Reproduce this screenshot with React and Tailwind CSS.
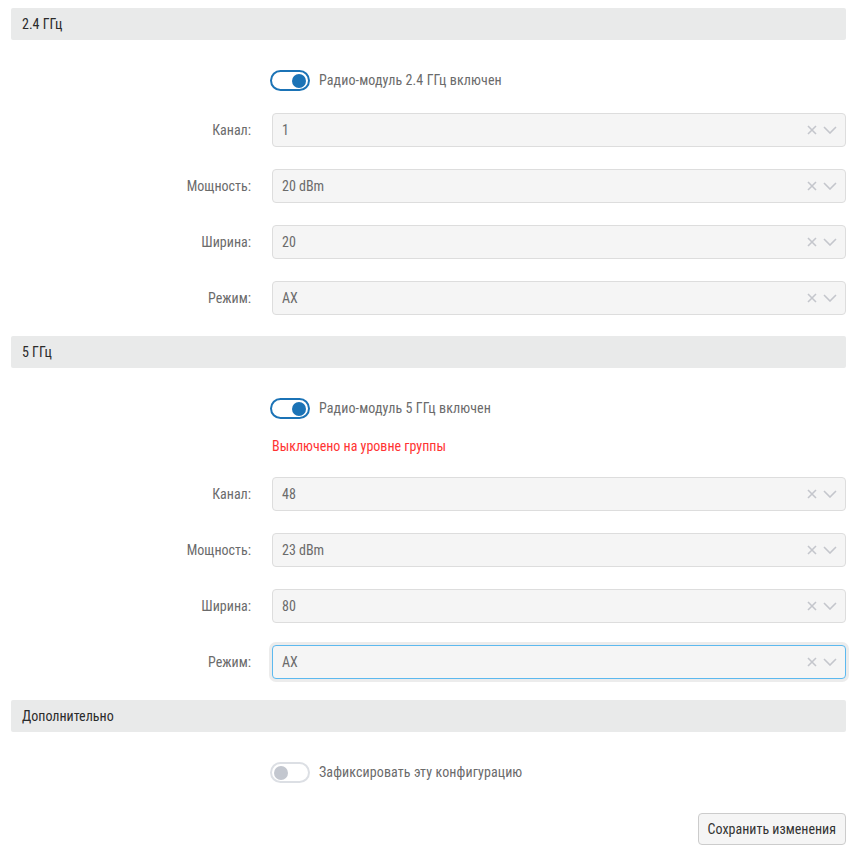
import React from "react";

const font = { fontFamily: "'Roboto Condensed', 'Liberation Sans', sans-serif" };

function SectionHeader({ children }) {
  return (
    <div className="flex h-8 items-center rounded-[2px] bg-[#e9eaea] pl-[11px] text-[14px] font-normal text-[#2b2b2b]">
      {children}
    </div>
  );
}

function Toggle({ on, label }) {
  return (
    <div className="flex items-center pl-[259px]">
      <span
        className={
          on
            ? "flex h-[21px] w-[40px] items-center justify-end rounded-full border-2 border-[#1b73b6] bg-white pr-[2px]"
            : "flex h-[21px] w-[40px] items-center justify-start rounded-full border-2 border-[#dcdfe4] bg-white pl-[2px]"
        }
      >
        <span className={on ? "h-[14px] w-[14px] rounded-full bg-[#1b73b6]" : "h-[14px] w-[14px] rounded-full bg-[#c3c7cf]"} />
      </span>
      <span className="ml-[9px] text-[14px] tracking-[0.1px] text-[#6b6b6b]">{label}</span>
    </div>
  );
}

function SelectRow({ label, value, focused }) {
  return (
    <div className="flex items-center">
      <div className="w-[240px] text-right text-[14px] text-[#6b6b6b]">{label}</div>
      <div className="ml-[21px] flex-1">
        <div
          className={
            focused
              ? "flex h-[34px] items-center rounded-[4px] border border-[#5cb9ef] bg-[#f5f5f5] pl-[9px] pr-[8px] ring-[3px] ring-[#ececec]"
              : "flex h-[34px] items-center rounded-[4px] border border-[#dddddd] bg-[#f5f5f5] pl-[9px] pr-[8px]"
          }
        >
          <span className="flex-1 text-[14px] text-[#6b6b6b]">{value}</span>
          <svg width="10" height="10" viewBox="0 0 10 10" className="mr-[6px]">
            <path d="M1 1 L9 9 M9 1 L1 9" stroke="#c4c6cc" strokeWidth="1.6" fill="none" />
          </svg>
          <svg width="14" height="8" viewBox="0 0 14 8">
            <path d="M1 1 L7 7 L13 1" stroke="#c4c6cc" strokeWidth="1.6" fill="none" />
          </svg>
        </div>
      </div>
    </div>
  );
}

export default function App() {
  return (
    <div className="min-h-[857px] bg-white pl-[11px] pr-[17px] pt-2" style={font}>
      <SectionHeader>2.4 ГГц</SectionHeader>
      <div className="mt-[30px]">
        <Toggle on label="Радио-модуль 2.4 ГГц включен" />
      </div>
      <div className="mt-[22px] flex flex-col gap-[22px]">
        <SelectRow label="Канал:" value="1" />
        <SelectRow label="Мощность:" value="20 dBm" />
        <SelectRow label="Ширина:" value="20" />
        <SelectRow label="Режим:" value="AX" />
      </div>

      <div className="mt-[21px]">
        <SectionHeader>5 ГГц</SectionHeader>
      </div>
      <div className="mt-[30px]">
        <Toggle on label="Радио-модуль 5 ГГц включен" />
      </div>
      <div className="mt-[17px] h-5 pl-[261px] text-[14px] leading-5 text-[#ff3333]">
        Выключено на уровне группы
      </div>
      <div className="mt-[21px] flex flex-col gap-[22px]">
        <SelectRow label="Канал:" value="48" />
        <SelectRow label="Мощность:" value="23 dBm" />
        <SelectRow label="Ширина:" value="80" />
        <SelectRow label="Режим:" value="AX" focused />
      </div>

      <div className="mt-[21px]">
        <SectionHeader>Дополнительно</SectionHeader>
      </div>
      <div className="mt-[30px]">
        <Toggle label="Зафиксировать эту конфигурацию" />
      </div>
      <div className="mt-[30px] flex justify-end">
        <button className="h-8 rounded-[4px] border border-[#cccccc] bg-[#f5f5f5] px-[9px] text-[14px] font-normal text-[#333]">
          Сохранить изменения
        </button>
      </div>
    </div>
  );
}
